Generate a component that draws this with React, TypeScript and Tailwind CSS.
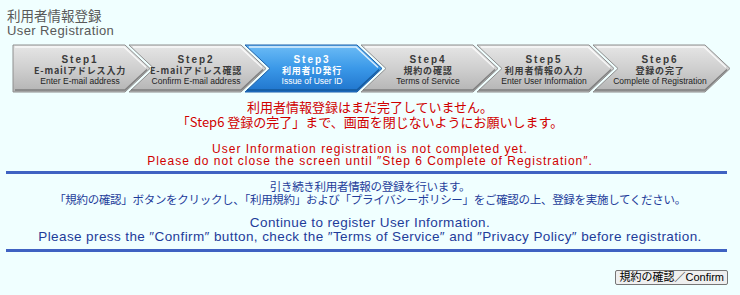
import React from "react";

const steps = [
  { s: "Step1", jp: "E-mailアドレス入力", en: "Enter E-mail address" },
  { s: "Step2", jp: "E-mailアドレス確認", en: "Confirm E-mail address" },
  { s: "Step3", jp: "利用者ID発行", en: "Issue of User ID" },
  { s: "Step4", jp: "規約の確認", en: "Terms of Service" },
  { s: "Step5", jp: "利用者情報の入力", en: "Enter User Information" },
  { s: "Step6", jp: "登録の完了", en: "Complete of Registration" },
];

const JP = '"Noto Sans CJK JP", "Liberation Sans", sans-serif';
const EN = '"Liberation Sans", "Noto Sans CJK JP", sans-serif';

function StepBar() {
  return (
    <svg width="718" height="50" viewBox="0 0 718 50" className="block">
      <defs>
        <linearGradient id="gray" x1="0" y1="0" x2="0" y2="1">
          <stop offset="0" stopColor="#e6e6e6" />
          <stop offset="0.5" stopColor="#cfcfcf" />
          <stop offset="1" stopColor="#b4b4b4" />
        </linearGradient>
        <linearGradient id="blue" x1="0" y1="0" x2="0" y2="1">
          <stop offset="0" stopColor="#6cbcf6" />
          <stop offset="0.5" stopColor="#3a98e8" />
          <stop offset="1" stopColor="#1f74cc" />
        </linearGradient>
      </defs>
      {steps.map((st, i) => {
        const x0 = 1 + i * 116;
        const active = i === 2;
        const pts =
          i === 0
            ? `${x0},1 ${x0 + 112},1 ${x0 + 137},24.5 ${x0 + 112},48 ${x0},48`
            : `${x0},1 ${x0 + 112},1 ${x0 + 137},24.5 ${x0 + 112},48 ${x0},48 ${x0 + 25},24.5`;
        const tc = x0 + 67;
        const fg = active ? "#ffffff" : "#3a3a3a";
        return (
          <g key={i}>
            <polygon
              points={pts}
              fill={active ? "url(#blue)" : "url(#gray)"}
              stroke={active ? "#1c5fa8" : "#8e8e8e"}
              strokeWidth="1"
            />
            <polyline
              points={`${i === 0 ? x0 + 2 : x0 + 4},3 ${x0 + 111},3 ${x0 + 133},23.5`}
              fill="none"
              stroke="#ffffff"
              strokeOpacity="0.8"
              strokeWidth="1.5"
            />
            <polyline
              points={`${x0 + 2},46 ${x0 + 112},46 ${x0 + 134},25.5`}
              fill="none"
              stroke={active ? "#12508f" : "#6e6e6e"}
              strokeOpacity="0.8"
              strokeWidth="1.5"
            />
            <text
              x={tc}
              y="18.5"
              textAnchor="middle"
              fontFamily={EN}
              fontSize="10"
              fontWeight="bold"
              letterSpacing="2"
              fill={fg}
            >
              {st.s}
            </text>
            <text
              x={tc}
              y="29.5"
              textAnchor="middle"
              fontFamily={JP}
              fontSize="9"
              fontWeight="bold"
              letterSpacing="0.8"
              fill={fg}
            >
              {st.jp}
            </text>
            <text
              x={tc}
              y="39.5"
              textAnchor="middle"
              fontFamily={EN}
              fontSize="8.5"
              fill={active ? "#ffffff" : "#222222"}
            >
              {st.en}
            </text>
          </g>
        );
      })}
    </svg>
  );
}

export default function App() {
  return (
    <div className="w-[740px] h-[295px] bg-[#f0ffff] overflow-hidden">
      <div className="pl-[7px] pt-[8px] text-[#595959]">
        <div className="text-[13.5px] leading-[15px]" style={{ fontFamily: JP }}>
          利用者情報登録
        </div>
        <div className="text-[13px] leading-[15px] tracking-[0.4px]" style={{ fontFamily: EN }}>
          User Registration
        </div>
      </div>
      <div className="mt-[6px] pl-[12px]">
        <StepBar />
      </div>
      <div className="mt-[5px] text-center text-[#d00000]">
        <div className="text-[13px] leading-[15px]" style={{ fontFamily: JP }}>
          <div>利用者情報登録はまだ完了していません。</div>
          <div>「Step6 登録の完了」まで、画面を閉じないようにお願いします。</div>
        </div>
        <div
          className="mt-[14px] text-[12px] leading-[12px] tracking-[1px]"
          style={{ fontFamily: EN }}
        >
          <div>User Information registration is not completed yet.</div>
          <div>Please do not close the screen until ″Step 6 Complete of Registration″.</div>
        </div>
      </div>
      <div className="ml-[6px] mr-[13px] mt-[4px] h-[3px] bg-[#3f62c2]" />
      <div className="mt-[6px] text-center text-[#1e3c9a]">
        <div className="text-[11.5px] leading-[13px] tracking-[-0.3px]" style={{ fontFamily: JP }}>
          <div>引き続き利用者情報の登録を行います。</div>
          <div>
            「規約の確認」ボタンをクリックし、「利用規約」および「プライバシーポリシー」をご確認の上、登録を実施してください。
          </div>
        </div>
        <div
          className="mt-[10px] text-[13.5px] leading-[14px] tracking-[0.4px]"
          style={{ fontFamily: EN }}
        >
          <div>Continue to register User Information.</div>
          <div>
            Please press the ″Confirm″ button, check the ″Terms of Service″ and ″Privacy Policy″ before registration.
          </div>
        </div>
      </div>
      <div className="ml-[6px] mr-[13px] mt-[5px] h-[3px] bg-[#3f62c2]" />
      <div className="flex justify-end pr-[12px] mt-[18px]">
        <button
          className="h-[15px] px-[3px] bg-[#efefef] border border-[#767676] rounded-[2px] text-[11px] leading-[13px] text-black"
          style={{ fontFamily: EN }}
        >
          規約の確認／Confirm
        </button>
      </div>
    </div>
  );
}
